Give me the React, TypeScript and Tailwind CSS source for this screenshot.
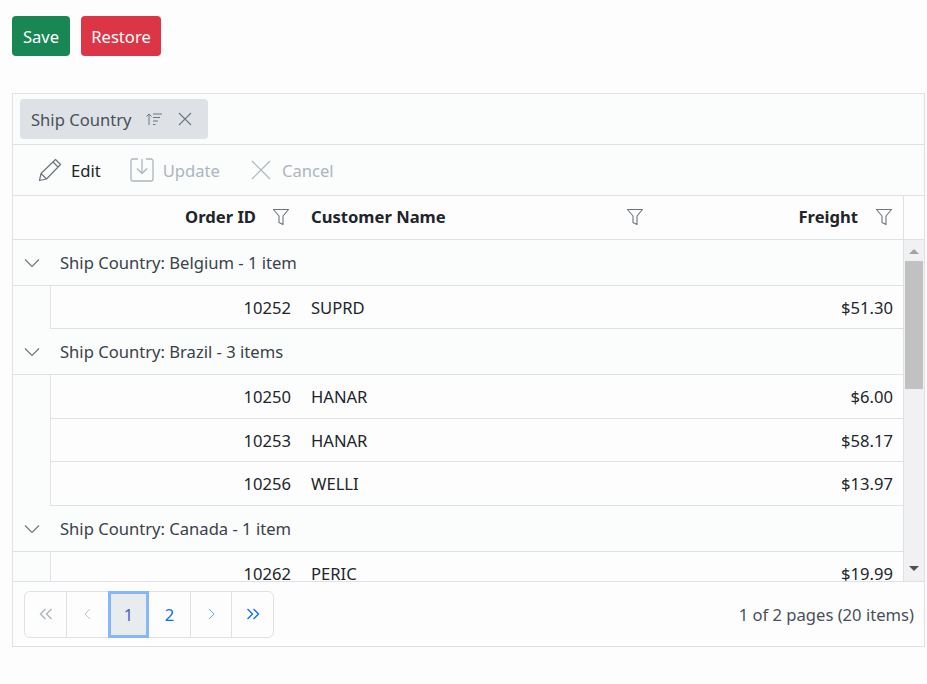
import React from "react";

const Filter = () => (
  <svg width="18" height="18" viewBox="0 0 18 18" fill="none" stroke="#6c757d" strokeWidth="1.1" className="shrink-0">
    <path d="M1.5 1.5h15l-5.5 6.5v8.5l-4-2v-6.5z" strokeLinejoin="round" />
  </svg>
);

const Chevron = () => (
  <svg width="16" height="10" viewBox="0 0 16 10" fill="none" stroke="#6c757d" strokeWidth="1.1">
    <path d="M1 1.5l7 7 7-7" />
  </svg>
);

const Group = ({ text }: { text: string }) => (
  <div className="flex h-[46px] shrink-0 items-center border-b border-[#dee2e6] bg-[#fbfcfc] pt-[1px]">
    <div className="flex w-[38px] justify-center"><Chevron /></div>
    <span className="pl-[9px] text-[#3a4149]">{text}</span>
  </div>
);

const Row = ({ id, name, price, h }: { id: string; name: string; price: string; h: string }) => (
  <div className={`flex shrink-0 bg-[#fbfcfc] ${h}`}>
    <div className="w-[37px] shrink-0" />
    <div className="grid flex-1 grid-cols-[250px_353px_1fr] items-center border-b border-l border-[#dee2e6] bg-[#fdfdfe] pt-[1px]">
      <div className="pr-[10px] text-right">{id}</div>
      <div className="pl-[10px]">{name}</div>
      <div className="pr-[10px] text-right">{price}</div>
    </div>
  </div>
);

export default function App() {
  return (
    <div className="h-[684px] overflow-hidden bg-[#fdfdfe] px-[12px] pt-[16px] text-[16.6px] leading-[24px] text-[#212529] font-['Noto_Sans',sans-serif]">
      <div className="flex gap-[11px]">
        <button className="h-[40px] w-[58px] rounded-[4px] bg-[#198754] pt-[1px] text-white">Save</button>
        <button className="h-[40px] w-[80px] rounded-[4px] bg-[#dc3545] pt-[1px] text-white">Restore</button>
      </div>

      <div className="mt-[37px] flex h-[554px] w-[913px] flex-col border border-[#dee2e6]">
        <div className="flex h-[51px] shrink-0 items-start border-b border-[#dee2e6] bg-[#fbfcfc] pl-[7px] pt-[5px]">
          <div className="flex h-[40px] w-[188px] items-center rounded-[4px] bg-[#dee2e6] pl-[11px] pt-[2px] text-[#495057]">
            <span>Ship Country</span>
            <svg width="18" height="14" viewBox="0 0 18 14" fill="none" stroke="#6c757d" strokeWidth="1" className="ml-[13px] -mt-[2px]">
              <path d="M4 13V2M1.5 4.500L4 2l2.500 2.500M8 2h9M8 5.500h7M8 9h5M8 12.500h2.500" />
            </svg>
            <svg width="16" height="16" viewBox="0 0 16 16" fill="none" stroke="#6c757d" strokeWidth="1.1" className="ml-[14px] -mt-[2px]">
              <path d="M2 2l12 12M14 2L2 14" />
            </svg>
          </div>
        </div>

        <div className="flex h-[51px] shrink-0 items-center border-b border-[#dee2e6] bg-[#fbfcfc] pl-[25px]">
          <svg width="24" height="24" viewBox="0 0 24 24" fill="none" stroke="#6c757d" strokeWidth="1.2" strokeLinejoin="round">
            <path d="M1.500 22.500l1.500-7L17.500 1.500l5 5L8.500 21zM3 15.500l5.500 5.500M15 4l5 5" />
          </svg>
          <span className="ml-[9px] pt-[2px]">Edit</span>
          <svg width="24" height="24" viewBox="0 0 24 24" fill="none" stroke="#adb5bd" strokeWidth="1.3" className="ml-[29px]">
            <path d="M8 1H3a2 2 0 0 0-2 2v18a2 2 0 0 0 2 2h18a2 2 0 0 0 2-2V3a2 2 0 0 0-2-2h-5M12 1v14M7 10.500l5 5 5-5" />
          </svg>
          <span className="ml-[9px] pt-[2px] text-[#adb5bd]">Update</span>
          <svg width="22" height="22" viewBox="0 0 22 22" fill="none" stroke="#adb5bd" strokeWidth="1.2" className="ml-[30px]">
            <path d="M2 2l18 18M20 2L2 20" />
          </svg>
          <span className="ml-[10px] pt-[2px] text-[#adb5bd]">Cancel</span>
        </div>

        <div className="flex h-[44px] shrink-0 border-b border-[#dee2e6] font-bold">
          <div className="w-[37px] shrink-0" />
          <div className="grid w-[854px] grid-cols-[250px_353px_1fr] items-center border-r border-[#dee2e6] pb-[1px]">
            <div className="flex items-center justify-end gap-[16px] pr-[10px]">Order ID<Filter /></div>
            <div className="flex items-center justify-between pl-[11px] pr-[9px]">Customer Name<Filter /></div>
            <div className="flex items-center justify-end gap-[17px] pr-[10px]">Freight<Filter /></div>
          </div>
        </div>

        <div className="flex h-[341px] shrink-0 overflow-hidden">
          <div className="flex w-[891px] shrink-0 flex-col overflow-hidden border-r border-[#dee2e6]">
            <Group text="Ship Country: Belgium - 1 item" />
            <Row id="10252" name="SUPRD" price="$51.30" h="h-[43px]" />
            <Group text="Ship Country: Brazil - 3 items" />
            <Row id="10250" name="HANAR" price="$6.00" h="h-[44px]" />
            <Row id="10253" name="HANAR" price="$58.17" h="h-[43px]" />
            <Row id="10256" name="WELLI" price="$13.97" h="h-[44px]" />
            <Group text="Ship Country: Canada - 1 item" />
            <Row id="10262" name="PERIC" price="$19.99" h="h-[43px]" />
          </div>
          <div className="flex w-[20px] shrink-0 flex-col items-center bg-[#f1f1f3] px-[1px]">
            <svg width="10" height="5" viewBox="0 0 10 5" className="mt-[9px] mb-[7px] shrink-0"><path d="M5 0l5 5H0z" fill="#a3a3a3" /></svg>
            <div className="h-[128px] w-[18px] shrink-0 bg-[#c1c1c1]" />
            <div className="flex-1" />
            <svg width="10" height="5" viewBox="0 0 10 5" className="mb-[10px] shrink-0"><path d="M0 0h10L5 5z" fill="#505050" /></svg>
          </div>
        </div>

        <div className="flex flex-1 items-center justify-between border-t border-[#dee2e6] pl-[11px] pr-[10px]">
          <div className="flex h-[47px] w-[250px] items-stretch rounded-[6px] border border-[#dee2e6] pt-0 text-[#0d6efd]">
            <div className="flex w-[42px] items-center justify-center border-r border-[#dee2e6] text-[#adb5bd]">
              <svg width="14" height="12" viewBox="0 0 14 12" fill="none" stroke="currentColor" strokeWidth="1.400"><path d="M6.500 1l-5 5 5 5M12.500 1l-5 5 5 5" /></svg>
            </div>
            <div className="flex w-[41px] items-center justify-center text-[#bfc6cc]">
              <svg width="7" height="12" viewBox="0 0 7 12" fill="none" stroke="currentColor" strokeWidth="1"><path d="M6 1L1 6l5 5" /></svg>
            </div>
            <div className="-my-[1px] flex w-[41px] items-center justify-center border-[3px] border-[#86b7fe] bg-[#e9ecef] pt-[1px] text-[#4a5fc0]">1</div>
            <div className="flex w-[42px] items-center justify-center border-r border-[#dee2e6] pt-[1px]">2</div>
            <div className="flex w-[41px] items-center justify-center border-r border-[#dee2e6]">
              <svg width="7" height="12" viewBox="0 0 7 12" fill="none" stroke="currentColor" strokeWidth="1" opacity="0.6"><path d="M1 1l5 5-5 5" /></svg>
            </div>
            <div className="flex flex-1 items-center justify-center">
              <svg width="14" height="12" viewBox="0 0 14 12" fill="none" stroke="currentColor" strokeWidth="1.400"><path d="M1.500 1l5 5-5 5M7.500 1l5 5-5 5" /></svg>
            </div>
          </div>
          <span className="pt-[1px] text-[#495057]">1 of 2 pages (20 items)</span>
        </div>
      </div>
    </div>
  );
}
